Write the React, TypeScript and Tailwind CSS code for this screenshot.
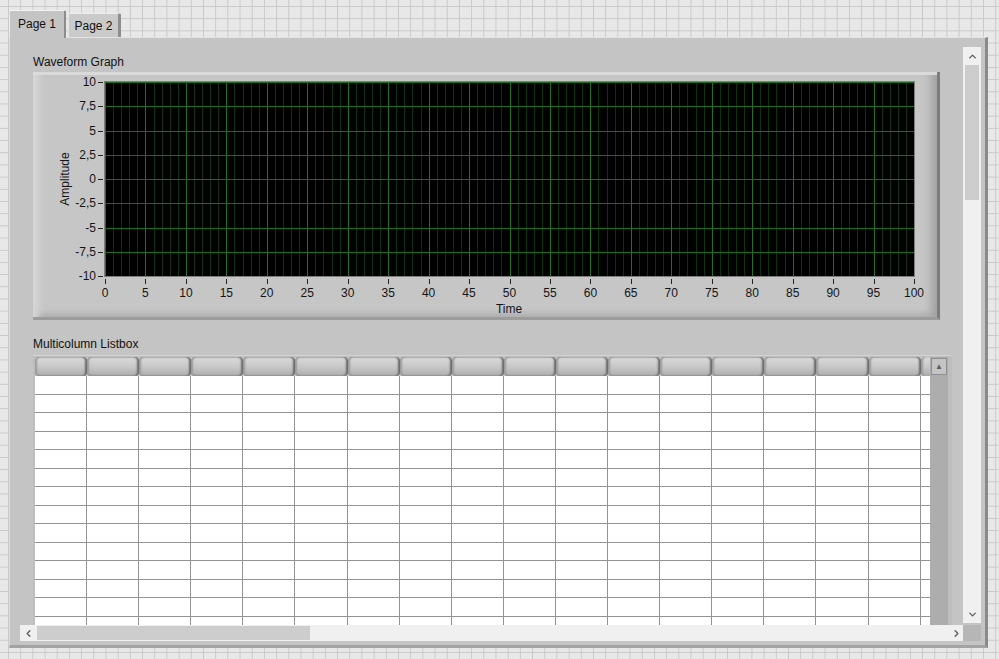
import { ChevronUp, ChevronDown, ChevronLeft, ChevronRight } from "lucide-react";

const font = "font-['Liberation_Sans',Arial,sans-serif]";

function WaveformGraph() {
  const px = 72;
  const py = 10;
  const pw = 809;
  const ph = 194;
  const yLabels = ["10", "7,5", "5", "2,5", "0", "-2,5", "-5", "-7,5", "-10"];
  const xLabels = Array.from({ length: 21 }, (_, i) => i * 5);
  const crisp = (v: number) => Math.round(v) + 0.5;

  return (
    <div className="h-[248px] w-[907px] border-r-[3px] border-b-[3px] border-r-[#7c7c7c] border-b-[#9c9c9c] bg-[#c6c6c6] shadow-[inset_0_3px_0_#dadada,inset_11px_0_6px_-5px_#d6d6d6,inset_-10px_0_8px_-4px_#a2a2a2,inset_0_-6px_6px_-3px_#acacac]">
      <svg width={904} height={245} className="block">
        <rect x={px} y={py} width={pw} height={ph} fill="#000" />
        {Array.from({ length: 101 }, (_, i) => {
          const x = crisp(px + (i * pw) / 100);
          return (
            <line
              key={`v${i}`}
              x1={x}
              x2={x}
              y1={py}
              y2={py + ph}
              stroke={i % 5 === 0 ? "#1d741d" : "#0a340a"}
              strokeWidth={1}
            />
          );
        })}
        {yLabels.map((_, j) => {
          const y = crisp(py + (j * ph) / 8);
          return <line key={`h${j}`} x1={px} x2={px + pw} y1={y} y2={y} stroke="#1b6e1b" strokeWidth={1} />;
        })}
        <rect x={px - 0.5} y={py - 0.5} width={pw + 1} height={ph + 1} fill="none" stroke="#7e7e7e" />

        {yLabels.map((label, j) => {
          const y = py + (j * ph) / 8;
          return (
            <g key={`yl${j}`}>
              <line x1={65} x2={70} y1={crisp(y)} y2={crisp(y)} stroke="#222" strokeWidth={1} />
              <text x={63} y={y + 4} textAnchor="end" fontFamily="Liberation Sans, Arial, sans-serif" fontSize={12} fill="#151515">
                {label}
              </text>
            </g>
          );
        })}

        {xLabels.map((label, k) => {
          const x = px + (k * pw) / 20;
          return (
            <g key={`xl${k}`}>
              <line x1={crisp(x)} x2={crisp(x)} y1={py + ph + 3} y2={py + ph + 8} stroke="#222" strokeWidth={1} />
              <text x={x} y={225} textAnchor="middle" fontFamily="Liberation Sans, Arial, sans-serif" fontSize={12} fill="#151515">
                {label}
              </text>
            </g>
          );
        })}

        <text
          transform="translate(36,107) rotate(-90)"
          textAnchor="middle"
          fontFamily="Liberation Sans, Arial, sans-serif"
          fontSize={12}
          fill="#151515"
        >
          Amplitude
        </text>
        <text x={476} y={241} textAnchor="middle" fontFamily="Liberation Sans, Arial, sans-serif" fontSize={12} fill="#151515">
          Time
        </text>
      </svg>
    </div>
  );
}

function Listbox() {
  const cols = Array.from({ length: 17 }, (_, i) => i);
  const rows = Array.from({ length: 14 }, (_, i) => i);

  return (
    <div className="flex h-[290px] w-[919px] bg-[#bdbdbd] pt-[2px] pl-[2px] pr-[4px] shadow-[inset_0_1px_0_#d4d4d4]">
      <div className="flex w-[895px] flex-col bg-white">
        <div className="flex h-[19px] shrink-0 bg-[#c4c4c4]">
          {cols.map((c) => (
            <div
              key={c}
              className="h-[19px] w-[52.1px] shrink-0 rounded-[4px] bg-[linear-gradient(to_bottom,#dcdcdc,#c6c6c6_55%,#adadad)] shadow-[inset_-2px_0_2px_#6a6a6a,inset_2px_0_2px_#9a9a9a]"
            />
          ))}
          <div className="h-[19px] flex-1 rounded-l-[4px] bg-[linear-gradient(to_bottom,#dcdcdc,#c6c6c6_55%,#adadad)] shadow-[inset_2px_0_2px_#9a9a9a]" />
        </div>
        {rows.map((r) => (
          <div key={r} className="flex h-[18.5px] shrink-0">
            {cols.map((c) => (
              <div key={c} className="h-full w-[52.1px] shrink-0 border-r border-b border-[#939393]" />
            ))}
            <div className="h-full flex-1 border-b border-[#939393]" />
          </div>
        ))}
      </div>
      <div className="flex w-[18px] flex-col bg-[#adadad]">
        <div className="mx-[1px] mt-[1px] flex h-[17px] items-center justify-center border border-[#8e8e8e] bg-[#c4c4c4] text-[8px] leading-none text-[#5e5e5e]">
          ▲
        </div>
      </div>
    </div>
  );
}

export default function App() {
  return (
    <div
      className={`flex h-[659px] w-[999px] flex-col overflow-hidden bg-[#e8e8e8] bg-[linear-gradient(to_right,#c9c9c9_1px,transparent_1px),linear-gradient(to_bottom,#c9c9c9_1px,transparent_1px)] bg-[length:12.2px_12.2px] bg-[position:8px_6px] pt-[10px] pl-[9px] ${font}`}
    >
      {/* tabs */}
      <div className="flex h-[27px] items-end">
        <div className="relative z-10 -mb-px flex h-[28px] w-[57px] items-center justify-center rounded-t-[2px] border-t border-l border-r-2 border-t-[#f4f4f4] border-l-[#ececec] border-r-[#8c8c8c] bg-[#c4c4c4] pb-[2px] text-[12px] text-[#111]">
          Page 1
        </div>
        <div className="ml-[2px] flex h-[24px] w-[53px] items-center justify-center rounded-t-[2px] border-t border-l border-r-[3px] border-t-[#eeeeee] border-l-[#e4e4e4] border-r-[#8e8e8e] bg-[#cacaca] text-[12px] text-[#111]">
          Page 2
        </div>
      </div>

      {/* tab panel */}
      <div className="flex h-[611px] w-[979px] flex-col border-t border-l border-r-[3px] border-b-[3px] border-t-[#e2e2e2] border-l-[#dcdcdc] border-r-[#8a8a8a] border-b-[#a3a3a3] bg-[#c4c4c4]">
        <div className="flex h-[587px]">
          <div className="w-[953px] overflow-hidden pt-[16px] pl-[23px]">
            <div className="mb-[2px] h-[16px] text-[12px] leading-[16px] text-[#111]">Waveform Graph</div>
            <WaveformGraph />
            <div className="mt-[16px] mb-[3px] h-[16px] text-[12px] leading-[16px] text-[#111]">Multicolumn Listbox</div>
            <Listbox />
          </div>
          <div className="w-[18px] pt-[9px]">
            <div className="flex h-[576px] flex-col bg-[#f0f0f0]">
              <div className="flex h-[18px] items-center justify-center">
                <ChevronUp size={11} strokeWidth={3} color="#5f5f5f" />
              </div>
              <div className="mx-[2px] h-[135px] bg-[#cdcdcd]" />
              <div className="flex-1" />
              <div className="flex h-[18px] items-center justify-center">
                <ChevronDown size={11} strokeWidth={3} color="#5f5f5f" />
              </div>
            </div>
          </div>
        </div>
        <div className="flex h-[16px] pl-[10px]">
          <div className="flex w-[943px] bg-[#f0f0f0]">
            <div className="flex w-[17px] items-center justify-center">
              <ChevronLeft size={11} strokeWidth={3} color="#5f5f5f" />
            </div>
            <div className="my-[1px] w-[273px] bg-[#cdcdcd]" />
            <div className="flex-1" />
            <div className="flex w-[14px] items-center justify-center">
              <ChevronRight size={11} strokeWidth={3} color="#5f5f5f" />
            </div>
          </div>
          <div className="w-[18px] bg-[#b6b6b6]" />
        </div>
      </div>
    </div>
  );
}
